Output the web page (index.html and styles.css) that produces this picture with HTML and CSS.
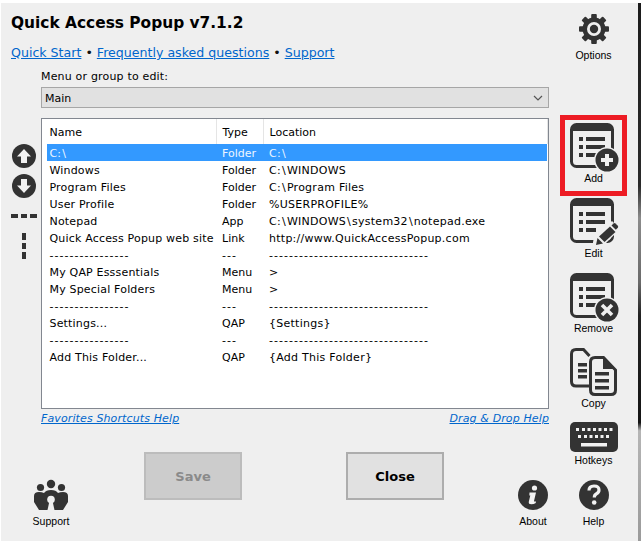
FILE: index.html
```html
<!DOCTYPE html>
<html lang="en">
<head>
<meta charset="utf-8">
<title>Quick Access Popup</title>
<link rel="stylesheet" href="styles.css">
</head>
<body>
<svg class="defs" xmlns="http://www.w3.org/2000/svg">
  <symbol id="sheet" viewBox="0 0 48 48">
    <rect x="1.500" y="1.500" width="41" height="42" rx="5" fill="none" stroke="#333" stroke-width="3"/>
    <path d="M3 2h38l2 2v4H1V4z" fill="#333"/>
    <path d="M9 14h4v4H9zM16 14h19v4H16zM9 22h4v4H9zM16 22h19v4H16zM9 30h4v4H9zM16 30h10v4H16z" fill="#333"/>
  </symbol>
</svg>
<div class="window">
  <div class="content">
    <header class="head">
      <h1 class="title">Quick Access Popup v7.1.2</h1>
      <p class="links"><a href="#">Quick Start</a> • <a href="#">Frequently asked questions</a> • <a href="#">Support</a></p>
    </header>
    <div class="editor">
      <div class="rail">
        <svg class="rail-arrow" viewBox="0 0 24 24"><circle cx="12" cy="12" r="12" fill="#333"/><path d="M12 5l7 7.500h-4V19H9v-6.500H5z" fill="#f2f2f2"/></svg>
        <svg class="rail-arrow" viewBox="0 0 24 24"><circle cx="12" cy="12" r="12" fill="#333"/><path d="M12 19l7-7.500h-4V5H9v6.500H5z" fill="#f2f2f2"/></svg>
        <svg class="rail-hsep" viewBox="0 0 26 4"><path d="M0 0h7v4H0zM10 0h6v4h-6zM19 0h7v4h-7z" fill="#333"/></svg>
        <svg class="rail-vsep" viewBox="0 0 4 26"><path d="M0 0h4v7H0zM0 10h4v6H0zM0 19h4v7H0z" fill="#333"/></svg>
      </div>
      <div class="main">
        <div class="field-label">Menu or group to edit:</div>
        <div class="select"><span class="select-value">Main</span>
          <svg class="chevron" viewBox="0 0 10 6"><path d="M1 1l4 4 4-4" fill="none" stroke="#555" stroke-width="1.200"/></svg>
        </div>
        <div class="listbox">
          <table class="list">
            <colgroup><col class="col-name"><col class="col-type"><col class="col-loc"></colgroup>
            <thead><tr><th>Name</th><th>Type</th><th>Location</th></tr></thead>
            <tbody>
              <tr class="selected"><td>C:<span class="bs">\</span></td><td>Folder</td><td>C:<span class="bs">\</span></td></tr>
              <tr><td>Windows</td><td>Folder</td><td>C:<span class="bs">\</span>WINDOWS</td></tr>
              <tr><td>Program Files</td><td>Folder</td><td>C:<span class="bs">\</span>Program Files</td></tr>
              <tr><td>User Profile</td><td>Folder</td><td>%USERPROFILE%</td></tr>
              <tr><td>Notepad</td><td>App</td><td>C:<span class="bs">\</span>WINDOWS<span class="bs">\</span>system32<span class="bs">\</span>notepad.exe</td></tr>
              <tr><td>Quick Access Popup web site</td><td>Link</td><td>http://www.QuickAccessPopup.com</td></tr>
              <tr class="rule"><td>----------------</td><td>---</td><td>--------------------------------</td></tr>
              <tr><td>My QAP Esssentials</td><td>Menu</td><td>&gt;</td></tr>
              <tr><td>My Special Folders</td><td>Menu</td><td>&gt;</td></tr>
              <tr class="rule"><td>----------------</td><td>---</td><td>--------------------------------</td></tr>
              <tr><td>Settings...</td><td>QAP</td><td>{Settings}</td></tr>
              <tr class="rule"><td>----------------</td><td>---</td><td>--------------------------------</td></tr>
              <tr><td>Add This Folder...</td><td>QAP</td><td>{Add This Folder}</td></tr>
            </tbody>
          </table>
        </div>
        <div class="help-links"><a href="#">Favorites Shortcuts Help</a><a href="#">Drag &amp; Drop Help</a></div>
      </div>
    </div>
    <footer class="foot">
      <div class="tool foot-support">
        <svg class="icon-support" viewBox="0 0 34 32">
          <circle cx="6.500" cy="8.500" r="3.600" fill="#333"/><circle cx="27.500" cy="8.500" r="3.600" fill="#333"/><circle cx="17" cy="5" r="4.200" fill="#333"/>
          <path d="M0 17q0-4 5-4 3 0 5 1 2-3 7-3t7 3q2-1 5-1 5 0 5 4v6l-5 8H5l-5-8z" fill="#333"/>
          <circle cx="17" cy="20.500" r="3.800" fill="#efefef"/><path d="M15.500 22h3l2 9h-7z" fill="#efefef"/>
        </svg>
        <span class="tool-label">Support</span>
      </div>
      <button class="btn btn-save" type="button">Save</button>
      <button class="btn btn-close" type="button">Close</button>
      <div class="tool foot-about">
        <svg class="icon-round" viewBox="0 0 30 30"><circle cx="15" cy="15" r="15" fill="#333"/><circle cx="16.500" cy="8" r="2.600" fill="#f2f2f2"/><path d="M11.500 12.500h6.500l-2 8.500q0 1 1.800.3v1.700q-2 1.300-4.500 1.300-3 0-2.500-2.500l1.500-6.300-1 0z" fill="#f2f2f2"/></svg>
        <span class="tool-label">About</span>
      </div>
    </footer>
  </div>
  <aside class="side">
    <div class="tool tool-options">
      <svg class="icon-round" viewBox="0 0 30 30">
        <g fill="#333">
          <rect x="12.200" y="0" width="5.600" height="30" rx="1"/><rect x="12.200" y="0" width="5.600" height="30" rx="1" transform="rotate(45 15 15)"/><rect x="12.200" y="0" width="5.600" height="30" rx="1" transform="rotate(90 15 15)"/><rect x="12.200" y="0" width="5.600" height="30" rx="1" transform="rotate(135 15 15)"/>
          <circle cx="15" cy="15" r="11.500"/>
        </g>
        <circle cx="15" cy="15" r="7" fill="#efefef"/><circle cx="15" cy="15" r="4.200" fill="#333"/>
      </svg>
      <span class="tool-label">Options</span>
    </div>
    <div class="tool tool-add">
      <svg class="icon-sheet" viewBox="0 0 48 48">
        <use href="#sheet" width="48" height="48"/>
        <circle cx="37" cy="37" r="13" fill="#efefef"/><circle cx="37" cy="37" r="11.500" fill="#333"/>
        <path d="M35 31h4v4h4v4h-4v4h-4v-4h-4v-4h4z" fill="#efefef"/>
      </svg>
      <span class="tool-label">Add</span>
    </div>
    <div class="tool tool-edit">
      <svg class="icon-sheet" viewBox="0 0 48 48">
        <use href="#sheet" width="48" height="48"/>
        <path d="M22 50l2-11 18-16 8 8-18 18z" fill="#efefef"/>
        <path d="M26 47l1.500-7 5.500 5.500z" fill="#333"/><path d="M29 38.500l11-10 5.500 5.500-11 10z" fill="#333"/><path d="M41.500 27.500l2-2q1-.8 2 0l2.300 2.300q.8 1 0 2l-2 2z" fill="#333"/>
      </svg>
      <span class="tool-label">Edit</span>
    </div>
    <div class="tool tool-remove">
      <svg class="icon-sheet" viewBox="0 0 48 48">
        <use href="#sheet" width="48" height="48"/>
        <circle cx="37" cy="37" r="13" fill="#efefef"/><circle cx="37" cy="37" r="11.500" fill="#333"/>
        <path d="M32 32l5 5 5-5M32 42l5-5 5 5" fill="none" stroke="#efefef" stroke-width="3.600"/>
      </svg>
      <span class="tool-label">Remove</span>
    </div>
    <div class="tool tool-copy">
      <svg class="icon-sheet" viewBox="0 0 48 48">
        <path d="M19 38H6q-4.500 0-4.500-4.500V6Q1.500 1.500 6 1.500h7.500l6 6.500" fill="none" stroke="#333" stroke-width="3"/>
        <path d="M8 15h9v3.500H8zM8 21h9v3.500H8zM8 27h9v3.500H8z" fill="#333"/>
        <path d="M20.500 14q0-4.500 4.500-4.500h8.500l12 12.500v20q0 4.500-4.500 4.500H25q-4.500 0-4.500-4.500z" fill="#efefef" stroke="#333" stroke-width="3"/>
        <path d="M33 10v11h12z" fill="#333"/>
        <path d="M25 24h14v3.500H25zM25 31h14v3.500H25zM25 38h14v3.500H25z" fill="#333"/>
      </svg>
      <span class="tool-label">Copy</span>
    </div>
    <div class="tool tool-hotkeys">
      <svg class="icon-keyboard" viewBox="0 0 48 30">
        <rect width="48" height="30" rx="5" fill="#333"/>
        <path d="M6 6h3v3H6zM12 6h3v3h-3zM17.500 6h3v3h-3zM23 6h3v3h-3zM28.500 6h3v3h-3zM34 6h3v3h-3zM39.500 6h3v3h-3zM8 13h3v3H8zM14 13h3v3h-3zM19.500 13h3v3h-3zM25 13h3v3h-3zM30.500 13h3v3h-3zM36 13h3v3h-3zM11 21h26v3.500H11z" fill="#f2f2f2"/>
      </svg>
      <span class="tool-label">Hotkeys</span>
    </div>
    <div class="tool tool-help">
      <svg class="icon-round" viewBox="0 0 30 30"><circle cx="15" cy="15" r="15" fill="#333"/><path d="M10 10.500q0-4.500 5-4.500t5 4q0 2.500-2.500 3.700-2.200 1.100-2.200 3.800" fill="none" stroke="#f2f2f2" stroke-width="3.200"/><circle cx="15.200" cy="22.500" r="2.300" fill="#f2f2f2"/></svg>
      <span class="tool-label">Help</span>
    </div>
  </aside>
  <div class="backdrop"></div>
</div>
</body>
</html>
```

FILE: styles.css
```css
* { box-sizing: border-box; }
html, body { margin: 0; padding: 0; }
body {
  width: 641px;
  height: 541px;
  overflow: hidden;
  background: #fff;
  padding: 3px 0 0 1px;
  font-family: "DejaVu Sans", sans-serif;
  font-size: 11px;
  color: #000;
}
.defs { display: none; }
.window { display: flex; height: 538px; background: #efefef; }
.content { width: 548px; display: flex; flex-direction: column; }
.head { padding: 10px 0 0 10px; height: 60px; }
.title { margin: 0; font-size: 15.400px; line-height: 20px; font-weight: 700; }
.links { margin: 10px 0 0; font-size: 12.600px; line-height: 20px; color: #111; white-space: nowrap; }
.links a { color: #0066cc; text-decoration: underline; }

.editor { display: flex; }
.rail { width: 40px; padding: 81px 0 0 11px; display: flex; flex-direction: column; }
.rail-arrow { width: 24px; height: 24px; display: block; margin-bottom: 6px; }
.rail-hsep { width: 26px; height: 4px; margin: 10px 0 0 -1px; display: block; }
.rail-vsep { width: 4px; height: 26px; margin: 15px 0 0 10px; display: block; }

.main { width: 508px; padding-top: 7px; }
.field-label { line-height: 13px; height: 13px; letter-spacing: .18px; }
.select {
  margin-top: 4px;
  height: 21px;
  background: #e1e1e1;
  border: 1px solid #a6a6a6;
  padding: 0 5px 0 3px;
  display: flex;
  align-items: center;
  justify-content: space-between;
}
.select-value { padding-top: 2px; }
.chevron { width: 10px; height: 6px; display: block; }
.listbox { margin-top: 10px; height: 291px; background: #fff; border: 1px solid #828790; padding: 0 1px 0 5px; }
.list { width: 500px; table-layout: fixed; border-collapse: collapse; }
.col-name { width: 169px; }
.col-type { width: 47px; }
.col-loc { width: 284px; }
.list th { height: 25px; padding: 2px 0 0 6px; font-weight: 400; text-align: left; border-right: 1px solid #e5e5e5; }
.list th:first-child { padding-left: 2.500px; }
.list td { height: 17px; padding: 2px 0 0 6px; white-space: nowrap; overflow: hidden; line-height: 15px; }
.list td:first-child { padding-left: 2.500px; letter-spacing: .18px; }
.list td:last-child { letter-spacing: .26px; }
.bs { padding: 0 1px; }
.selected td { background: #3399ff; color: #eef6ff; }
.list .rule td { letter-spacing: 1.030px; }
.help-links { display: flex; justify-content: space-between; margin-top: 3px; line-height: 14px; font-style: italic; letter-spacing: .12px; }
.help-links a { color: #0066cc; text-decoration: underline; }

.foot { display: flex; align-items: flex-start; padding-top: 26px; }
.btn {
  width: 98px;
  height: 48px;
  font-family: "DejaVu Sans", sans-serif;
  font-size: 13px;
  font-weight: 700;
  padding: 0;
}
.btn-save { margin-left: 63px; background: #cccccc; border: 2px solid #bcbcbc; color: #8a8a8a; }
.btn-close { margin-left: 104px; background: #e1e1e1; border: 2px solid #adadad; color: #000; }
.foot-support { width: 60px; margin: 27px 0 0 20px; }
.foot-about { width: 32px; margin: 28px 0 0 73px; }

.side { width: 89px; display: flex; flex-direction: column; align-items: center; }
.tool { display: flex; flex-direction: column; align-items: center; }
.tool-label { display: block; font-family: "Liberation Sans", Arial, sans-serif; font-size: 10.500px; line-height: 12px; white-space: nowrap; color: #000; }
.icon-round { width: 30px; height: 30px; display: block; margin-bottom: 5px; }
.icon-support { width: 34px; height: 32px; display: block; margin-bottom: 4px; }
.icon-sheet { width: 48px; height: 48px; display: block; margin-bottom: 1px; overflow: visible; }
.icon-keyboard { width: 48px; height: 30px; display: block; margin-bottom: 2px; }
.tool-options { margin-top: 11px; }
.tool-add { margin-top: 54px; width: 67px; height: 81px; border: 5px solid #ed1c24; padding-top: 3px; }
.tool-edit { margin-top: 2px; }
.tool-remove, .tool-copy, .tool-help { margin-top: 14px; }
.tool-hotkeys { margin-top: 13px; }

.backdrop {
  width: 3px;
  background: linear-gradient(180deg, #1c1c1c 0, #2a2a2a 34%, #8c8c8c 40%, #6a6a6a 52%, #222 58%, #141414 78%, #b5b5b5 79.500%, #9a9a9a 100%);
}
```
